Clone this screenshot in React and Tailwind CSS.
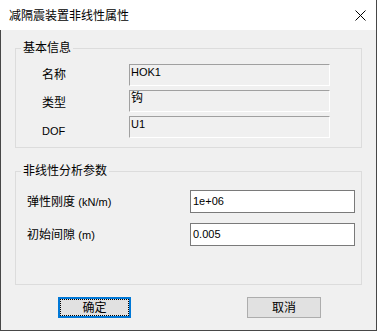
import React from "react";

const font = { fontFamily: '"Liberation Sans", "Noto Sans CJK SC", sans-serif' };

function ReadField({ children }) {
  return (
    <div className="h-[22px] w-[201px] border-t border-l border-b border-r border-t-[#a0a0a0] border-l-[#a0a0a0] border-b-white border-r-white bg-[#f0f0f0] pl-[1px] text-[11px] leading-[14px] text-black">
      {children}
    </div>
  );
}

function Input({ value }) {
  return (
    <div className="flex h-[23px] w-[165px] items-center border border-[#7a7a7a] bg-white pb-[2px] pl-[2px] text-[11px] leading-[14px] text-black">
      {value}
    </div>
  );
}

export default function App() {
  return (
    <div className="h-[331px] w-[377px] border-r border-[#474747] bg-white" style={font}>
      {/* Title bar */}
      <div className="flex h-[30px] items-center justify-between bg-white pl-[9px] pr-[10px]">
        <span className="pt-[1px] text-[12px] leading-[16px] text-black">减隔震装置非线性属性</span>
        <svg width="11" height="11" viewBox="0 0 11 11" className="mt-[1px]">
          <path d="M0.5 0.5 L10.5 10.5 M10.5 0.5 L0.5 10.5" stroke="#000" strokeWidth="1" fill="none" />
        </svg>
      </div>
      {/* Body */}
      <div className="flex h-[301px] flex-col border-b border-l border-[#474747] bg-[#f0f0f0]">
        {/* Group 1 */}
        <div className="relative mx-[14px] mt-[18px] h-[100px] border border-[#dcdcdc]">
          <span className="absolute -top-[9px] left-[5px] bg-[#f0f0f0] px-[2px] text-[12px] leading-[16px] text-black">
            基本信息
          </span>
          <div className="flex">
            <div className="flex w-[113px] flex-col gap-[12px] pl-[26px] pt-[18px] text-[12px] leading-[16px] text-black">
              <span>名称</span>
              <span>类型</span>
              <span className="text-[11px]">DOF</span>
            </div>
            <div className="flex flex-col gap-[4px] pt-[15px]">
              <ReadField>HOK1</ReadField>
              <ReadField>
                <span className="text-[12px]">钩</span>
              </ReadField>
              <ReadField>U1</ReadField>
            </div>
          </div>
        </div>
        {/* Group 2 */}
        <div className="relative mx-[14px] mt-[23px] h-[114px] border border-[#dcdcdc]">
          <span className="absolute -top-[9px] left-[5px] bg-[#f0f0f0] px-[2px] text-[12px] leading-[16px] text-black">
            非线性分析参数
          </span>
          <div className="flex flex-col gap-[10px] pt-[18px]">
            <div className="flex items-center">
              <span className="w-[174px] pl-[11px] text-[12px] leading-[16px] text-black">
                弹性刚度 <span className="text-[11px]">(kN/m)</span>
              </span>
              <Input value="1e+06" />
            </div>
            <div className="flex items-center">
              <span className="w-[174px] pl-[11px] text-[12px] leading-[16px] text-black">
                初始间隙 <span className="text-[11px]">(m)</span>
              </span>
              <Input value="0.005" />
            </div>
          </div>
        </div>
        {/* Buttons */}
        <div className="mt-[12px] flex gap-[116px] pl-[57px]">
          <button className="h-[21px] w-[73px] border-2 border-[#0078d7] bg-[#e1e1e1] p-0">
            <div className="flex h-full w-full items-center justify-center border border-dotted border-black text-[12px] leading-[16px] text-black">
              确定
            </div>
          </button>
          <button className="flex h-[21px] w-[74px] items-center justify-center border border-[#adadad] bg-[#e1e1e1] text-[12px] leading-[16px] text-black">
            取消
          </button>
        </div>
      </div>
    </div>
  );
}
